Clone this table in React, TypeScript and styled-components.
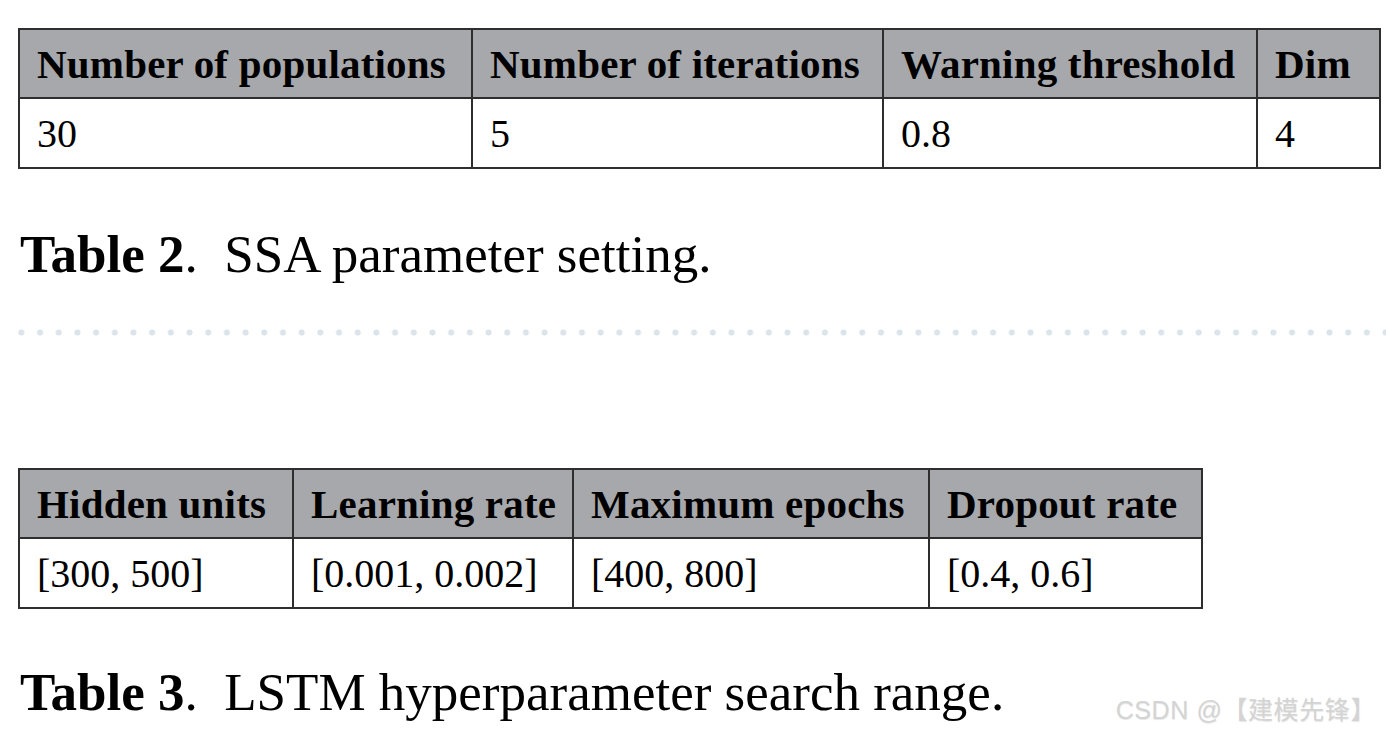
import React from 'react';
import styled, { createGlobalStyle } from 'styled-components';

const GlobalStyle = createGlobalStyle`
  html, body {
    margin: 0;
    padding: 0;
    background: #ffffff;
  }
  body {
    font-family: "Liberation Serif", "Times New Roman", serif;
    color: #000;
  }
`;

const Page = styled.div`
  position: relative;
  width: 1386px;
  height: 735px;
  overflow: hidden;
  background: #fff;
  padding: 28px 0 0 18px;
  box-sizing: border-box;
`;

const Table = styled.table`
  border-collapse: collapse;
  table-layout: fixed;
  font-family: "Liberation Serif", "Times New Roman", serif;
  font-size: 40px;
`;

const Col = styled.col<{ w: number }>`
  width: ${p => p.w}px;
`;

const HeadCell = styled.th`
  background: #a7a8ab;
  border: 2px solid #2e2e2e;
  height: 67px;
  padding: 0 0 0 17px;
  text-align: left;
  font-weight: 700;
  font-size: 41px;
  white-space: nowrap;
  letter-spacing: 0.2px;
`;

const Cell = styled.td`
  border: 2px solid #2e2e2e;
  height: 68px;
  padding: 0 0 0 17px;
  text-align: left;
  font-weight: 400;
  white-space: nowrap;
`;

const Caption = styled.div<{ mt: number }>`
  margin-top: ${p => p.mt}px;
  padding-left: 2px;
  font-size: 53px;
  line-height: 60px;
  white-space: pre;
`;

const Bold = styled.span`
  font-weight: 700;
`;

const Dots = styled.div`
  margin: 45px 0 0 -6px;
  height: 7px;
  width: 1380px;
  background-image: radial-gradient(circle, #dce4eb 2.8px, transparent 3.3px);
  background-size: 18.7px 7px;
  background-repeat: repeat-x;
`;

const Spacer = styled.div<{ h: number }>`
  height: ${p => p.h}px;
`;

const Watermark = styled.div`
  position: absolute;
  right: 10px;
  bottom: 9px;
  font-family: "Liberation Sans", "Noto Sans CJK SC", sans-serif;
  font-size: 25px;
  font-weight: 400;
  color: #d4d4d4;
  text-shadow: 0.5px 0.5px 1px rgba(0, 0, 0, 0.1);
  letter-spacing: 0.6px;
`;

type TableSpec = {
  widths: number[];
  head: string[];
  body: string[];
};

const ssa: TableSpec = {
  widths: [453, 411, 374, 123],
  head: ['Number of populations', 'Number of iterations', 'Warning threshold', 'Dim'],
  body: ['30', '5', '0.8', '4'],
};

const lstm: TableSpec = {
  widths: [274, 280, 356, 273],
  head: ['Hidden units', 'Learning rate', 'Maximum epochs', 'Dropout rate'],
  body: ['[300, 500]', '[0.001, 0.002]', '[400, 800]', '[0.4, 0.6]'],
};

const ParamTable = ({ spec }: { spec: TableSpec }) => (
  <Table>
    <colgroup>
      {spec.widths.map((w, i) => <Col key={i} w={w} />)}
    </colgroup>
    <thead>
      <tr>
        {spec.head.map(h => <HeadCell key={h}>{h}</HeadCell>)}
      </tr>
    </thead>
    <tbody>
      <tr>
        {spec.body.map((c, i) => <Cell key={i}>{c}</Cell>)}
      </tr>
    </tbody>
  </Table>
);

const App = () => {
  return (
    <Page>
      <GlobalStyle />
      <ParamTable spec={ssa} />
      <Caption mt={55}>
        <Bold>Table 2</Bold>{'.  SSA parameter setting.'}
      </Caption>
      <Dots />
      <Spacer h={132} />
      <ParamTable spec={lstm} />
      <Caption mt={53}>
        <Bold>Table 3</Bold>{'.  LSTM hyperparameter search range.'}
      </Caption>
      <Watermark>CSDN @【建模先锋】</Watermark>
    </Page>
  );
};

export default App;
